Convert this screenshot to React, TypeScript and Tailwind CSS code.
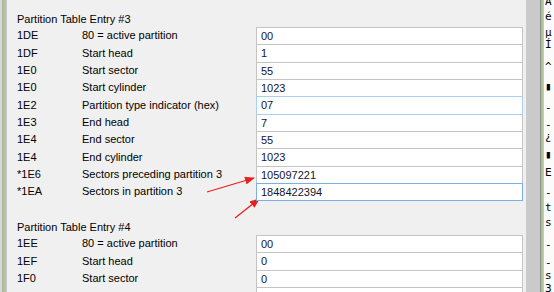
import React from "react";

type Row = { a: string; d: string; v: string; h: string; hl?: "soft" | "strong" };

const sec1: Row[] = [
  { a: "1DE", d: "80 = active partition", v: "00", h: "h-[17px]" },
  { a: "1DF", d: "Start head", v: "1", h: "h-[18px]" },
  { a: "1E0", d: "Start sector", v: "55", h: "h-[17px]" },
  { a: "1E0", d: "Start cylinder", v: "1023", h: "h-[17px]" },
  { a: "1E2", d: "Partition type indicator (hex)", v: "07", h: "h-[18px]", hl: "soft" },
  { a: "1E3", d: "End head", v: "7", h: "h-[17px]" },
  { a: "1E4", d: "End sector", v: "55", h: "h-[17px]" },
  { a: "1E4", d: "End cylinder", v: "1023", h: "h-[18px]" },
  { a: "*1E6", d: "Sectors preceding partition 3", v: "105097221", h: "h-[17px]" },
  { a: "*1EA", d: "Sectors in partition 3", v: "1848422394", h: "h-[17px]", hl: "strong" },
];

const sec2: Row[] = [
  { a: "1EE", d: "80 = active partition", v: "00", h: "h-[17px]" },
  { a: "1EF", d: "Start head", v: "0", h: "h-[18px]" },
  { a: "1F0", d: "Start sector", v: "0", h: "h-[17px]" },
  { a: "", d: "", v: "0", h: "h-[17px]" },
];

function Rows({ rows }: { rows: Row[] }) {
  return (
    <div className="flex flex-col">
      {rows.map((r, i) => {
        const border =
          r.hl === "strong"
            ? "border-[#79b0e6] z-10"
            : r.hl === "soft"
            ? "border-[#a9d0f2] z-10"
            : "border-[#c4c4c4]";
        return (
          <div key={i} className={`grid grid-cols-[65px_174px_267px] ${r.h}`}>
            <div className="flex items-center">{r.a}</div>
            <div className="flex items-center whitespace-nowrap">{r.d}</div>
            <div className="relative">
              <div
                className={`absolute left-0 top-0 w-full h-[calc(100%+1px)] border bg-white flex items-center pl-[4px] text-[#14142e] ${border}`}
              >
                {r.v}
              </div>
            </div>
          </div>
        );
      })}
    </div>
  );
}

const paneChars: { c: string; cls: string }[] = [
  { c: "Ă", cls: "h-[12px]" },
  { c: "é", cls: "h-[15px]" },
  { c: "µ", cls: "h-[16px]" },
  { c: "Í", cls: "h-[12px]" },
  { c: "^", cls: "h-[22px]" },
  { c: "▮", cls: "h-[20px]" },
  { c: "-", cls: "h-[21px]" },
  { c: "-", cls: "h-[17px]" },
  { c: "¿", cls: "h-[12px]" },
  { c: "▮", cls: "h-[18px]" },
  { c: "E", cls: "h-[18px]" },
  { c: "-", cls: "h-[20px]" },
  { c: "t", cls: "h-[15px]" },
  { c: "s", cls: "h-[15px]" },
  { c: "-", cls: "h-[22px]" },
  { c: "-", cls: "h-[18px]" },
  { c: "s", cls: "h-[13px]" },
  { c: "3", cls: "h-[13px]" },
];

export default function App() {
  return (
    <div className="relative w-[554px] h-[292px] overflow-hidden flex bg-[#f0f0f0] text-[11px] text-black font-['Liberation_Sans',Arial,sans-serif]">
      {/* left window edge */}
      <div className="w-[2px] h-full bg-[#d8d8d8]" />
      <div className="w-[4px] h-full bg-gradient-to-r from-[#aab79b] to-[#bcc7ae]" />
      <div className="w-[1px] h-full bg-[#c6c6c6]" />

      {/* main panel */}
      <div className="w-[519px] h-full pl-[10px] pt-[11px]">
        <div className="h-[16px] flex items-center">Partition Table Entry #3</div>
        <Rows rows={sec1} />
        <div className="h-[19px]" />
        <div className="h-[16px] flex items-center">Partition Table Entry #4</div>
        <Rows rows={sec2} />
      </div>

      {/* gutter strip */}
      <div className="w-[14px] h-full bg-[#cacaca]" />
      <div className="w-[1px] h-full bg-[#8e9a86]" />
      <div className="w-[3px] h-full bg-gradient-to-r from-[#9fb48c] to-[#c5d2b8]" />

      {/* hex pane */}
      <div className="flex-1 h-full bg-[#fbfbfb] overflow-hidden font-['DejaVu_Sans_Mono',monospace] text-[11px] leading-[12px] text-black pl-[1px]">
        <div className="flex flex-col -mt-[4px]">
          {paneChars.map((p, i) => (
            <div key={i} className={`${p.cls} flex items-end`}>
              {p.c}
            </div>
          ))}
        </div>
      </div>

      {/* red annotation arrows */}
      <svg className="absolute left-0 top-0 pointer-events-none" width="554" height="292">
        <defs>
          <marker id="ah" markerWidth="10" markerHeight="8" refX="9" refY="4" orient="auto" markerUnits="userSpaceOnUse">
            <path d="M0,0 L10,4 L0,8 Z" fill="#e8201e" />
          </marker>
        </defs>
        <line x1="207" y1="192" x2="254" y2="178" stroke="#e8201e" strokeWidth="1.2" markerEnd="url(#ah)" />
        <line x1="235" y1="218" x2="259" y2="199" stroke="#e8201e" strokeWidth="1.2" markerEnd="url(#ah)" />
      </svg>
    </div>
  );
}
